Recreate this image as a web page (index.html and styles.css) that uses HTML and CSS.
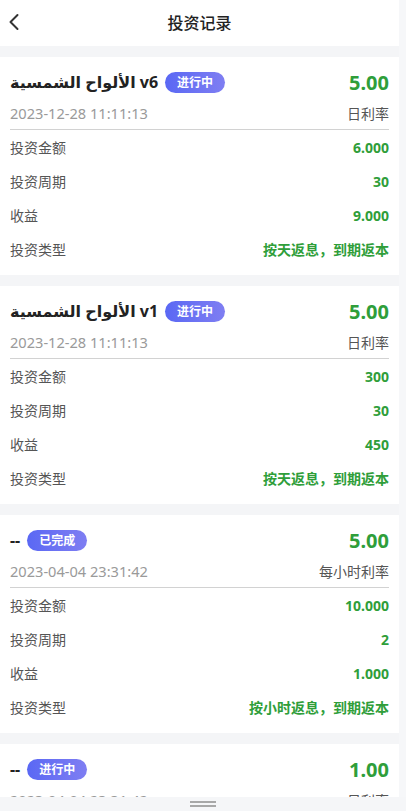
FILE: index.html
```html
<!DOCTYPE html>
<html lang="zh-CN">
<head>
<meta charset="utf-8">
<title>投资记录</title>
<link rel="stylesheet" href="styles.css">
</head>
<body>
<div class="page">
  <header class="topbar">
    <span class="back">
      <svg width="12" height="18" viewBox="0 0 12 18"><path d="M9.5 2 L2.5 9 L9.5 16" fill="none" stroke="#333" stroke-width="2" stroke-linecap="round" stroke-linejoin="round"/></svg>
    </span>
    <h1 class="title">投资记录</h1>
  </header>

  <main class="list">
    <section class="card">
      <div class="card-head">
        <div class="name"><span class="name-text">الألواح الشمسية v6</span><span class="badge">进行中</span></div>
        <div class="rate">5.00</div>
      </div>
      <div class="sub"><span class="date">2023-12-28 11:11:13</span><span class="rate-label">日利率</span></div>
      <div class="rows">
        <div class="row"><span class="label">投资金额</span><span class="val">6.000</span></div>
        <div class="row"><span class="label">投资周期</span><span class="val">30</span></div>
        <div class="row"><span class="label">收益</span><span class="val">9.000</span></div>
        <div class="row"><span class="label">投资类型</span><span class="val">按天返息，到期返本</span></div>
      </div>
    </section>

    <section class="card">
      <div class="card-head">
        <div class="name"><span class="name-text">الألواح الشمسية v1</span><span class="badge">进行中</span></div>
        <div class="rate">5.00</div>
      </div>
      <div class="sub"><span class="date">2023-12-28 11:11:13</span><span class="rate-label">日利率</span></div>
      <div class="rows">
        <div class="row"><span class="label">投资金额</span><span class="val">300</span></div>
        <div class="row"><span class="label">投资周期</span><span class="val">30</span></div>
        <div class="row"><span class="label">收益</span><span class="val">450</span></div>
        <div class="row"><span class="label">投资类型</span><span class="val">按天返息，到期返本</span></div>
      </div>
    </section>

    <section class="card">
      <div class="card-head">
        <div class="name"><span class="name-text">--</span><span class="badge">已完成</span></div>
        <div class="rate">5.00</div>
      </div>
      <div class="sub"><span class="date">2023-04-04 23:31:42</span><span class="rate-label">每小时利率</span></div>
      <div class="rows">
        <div class="row"><span class="label">投资金额</span><span class="val">10.000</span></div>
        <div class="row"><span class="label">投资周期</span><span class="val">2</span></div>
        <div class="row"><span class="label">收益</span><span class="val">1.000</span></div>
        <div class="row"><span class="label">投资类型</span><span class="val">按小时返息，到期返本</span></div>
      </div>
    </section>

    <section class="card">
      <div class="card-head">
        <div class="name"><span class="name-text">--</span><span class="badge">进行中</span></div>
        <div class="rate">1.00</div>
      </div>
      <div class="sub"><span class="date">2023-04-04 23:31:42</span><span class="rate-label">日利率</span></div>
      <div class="rows">
        <div class="row"><span class="label">投资金额</span><span class="val">1.000</span></div>
      </div>
    </section>
  </main>
</div>
<div class="bottom-bar"><span class="handle"></span></div>
</body>
</html>
```
FILE: styles.css
```css
html, body {
  margin: 0;
  padding: 0;
}
body {
  background: #f6f7f9;
  font-family: "Noto Sans", "Noto Sans CJK SC", "DejaVu Sans", sans-serif;
  color: #333;
  height: 811px;
  overflow: hidden;
}
.page {
  width: 399px;
  background: #f4f5f7;
}
.topbar {
  height: 46px;
  background: #fff;
  display: flex;
  align-items: center;
  justify-content: center;
  position: relative;
}
.back {
  position: absolute;
  left: 8px;
  top: 13px;
  display: flex;
}
.title {
  margin: 0;
  font-size: 16px;
  font-weight: 500;
  color: #222;
  line-height: 22px;
}
.list {
  padding-top: 11px;
  display: flex;
  flex-direction: column;
  gap: 11px;
}
.card {
  background: #fff;
  padding: 12px 10px 9px 10px;
}
.card-head {
  height: 26px;
  display: flex;
  align-items: center;
  justify-content: space-between;
}
.name {
  display: flex;
  align-items: center;
  gap: 7px;
}
.name-text {
  font-size: 16px;
  font-weight: 700;
  color: #222;
}
.badge {
  display: inline-flex;
  align-items: center;
  justify-content: center;
  height: 21px;
  width: 60px;
  border-radius: 11px;
  background: linear-gradient(90deg, #5a68f4, #7f7ef2);
  color: #fff;
  font-size: 12px;
  font-weight: 700;
}
.rate {
  font-size: 20px;
  font-weight: 700;
  color: #2f9e3a;
}
.sub {
  margin-top: 5px;
  height: 26px;
  display: flex;
  align-items: center;
  justify-content: space-between;
  border-bottom: 1px solid #d2d2d2;
  padding-bottom: 3px;
}
.date {
  font-size: 14.6px;
  color: #9a9a9a;
}
.rate-label {
  font-size: 14px;
  color: #555;
}
.rows {
  display: flex;
  flex-direction: column;
}
.row {
  height: 34px;
  display: flex;
  align-items: center;
  justify-content: space-between;
  font-size: 14px;
}
.label {
  color: #555;
}
.val {
  color: #2f9e3a;
  font-weight: 700;
}
.bottom-bar {
  position: fixed;
  left: 0;
  right: 0;
  bottom: 0;
  height: 14px;
  background: #f5f6f8;
  display: flex;
  justify-content: center;
  align-items: center;
}
.handle {
  width: 26px;
  border-top: 2px solid #a8a8a8;
  border-bottom: 2px solid #a8a8a8;
  box-sizing: border-box;
  height: 6px;
}
```
